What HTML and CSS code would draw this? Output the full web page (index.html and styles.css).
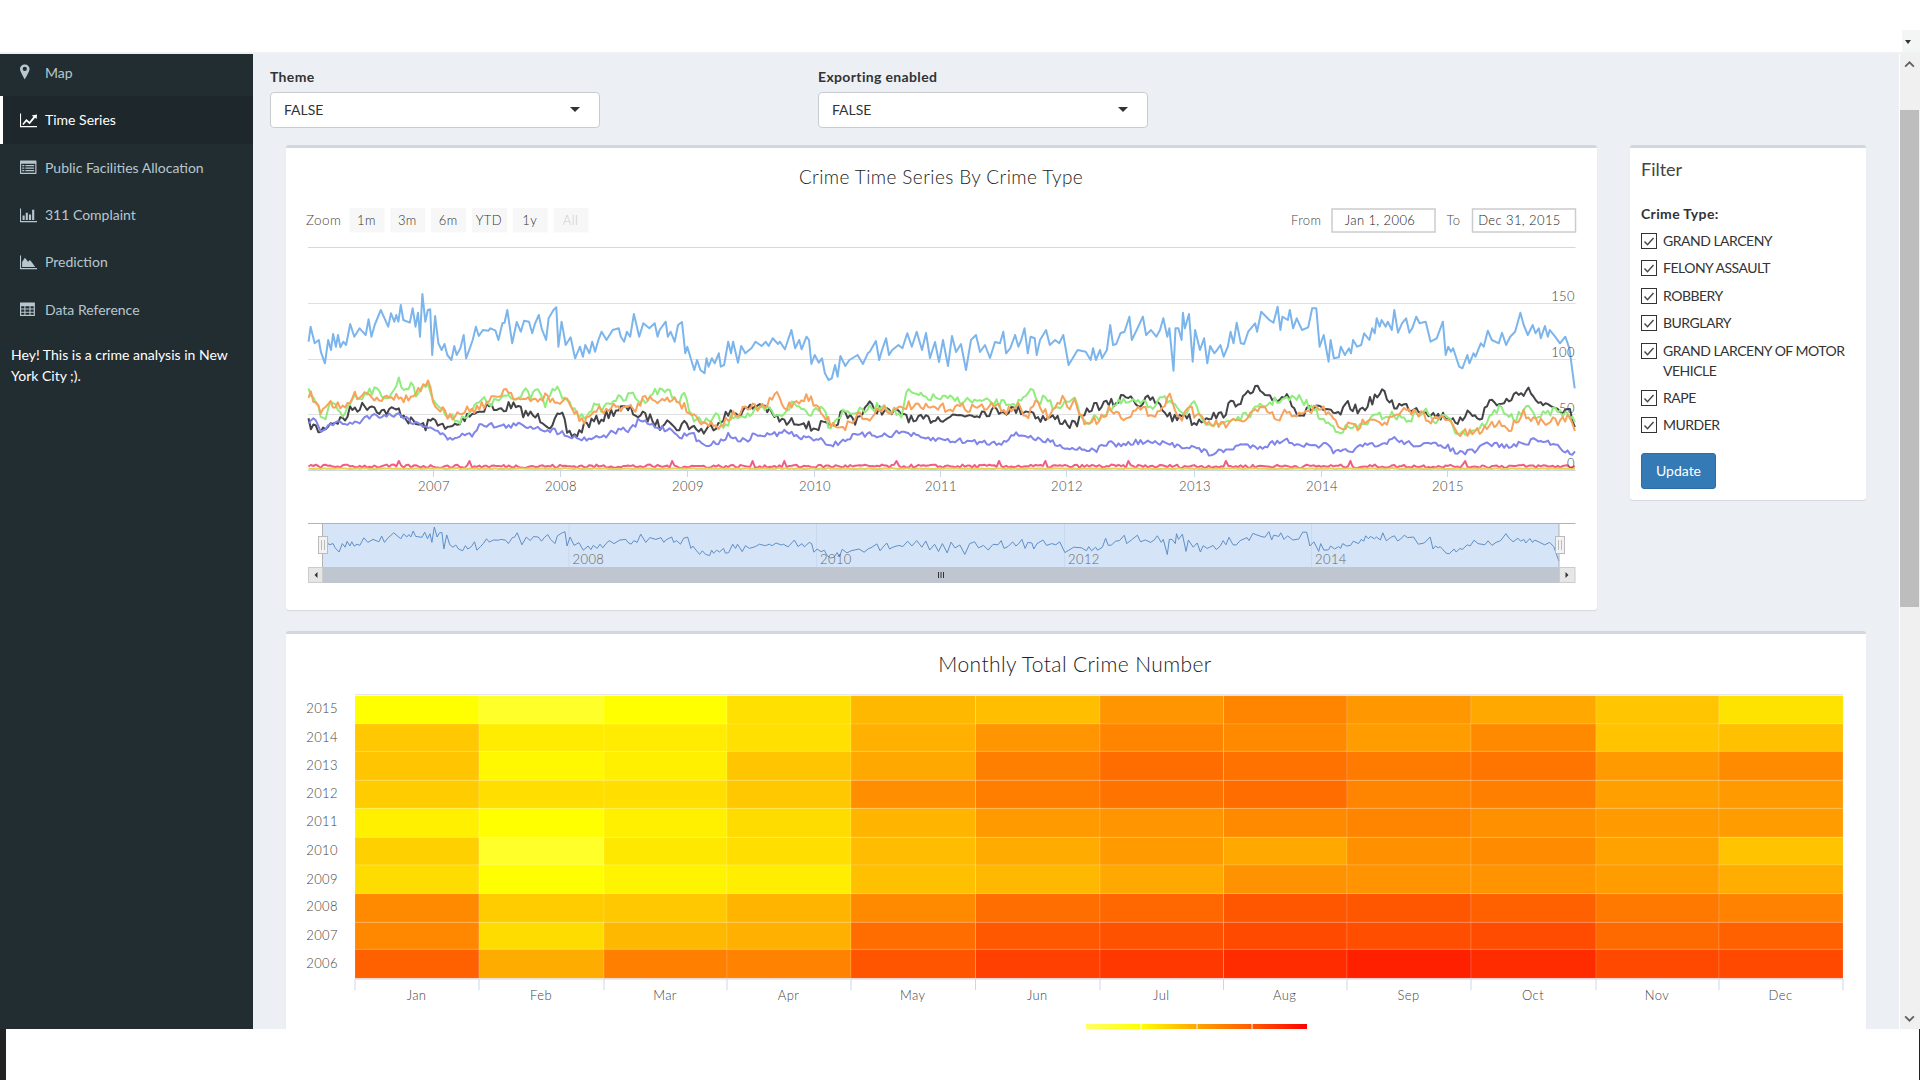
FILE: index.html
```html
<!DOCTYPE html>
<html lang="en">
<head>
    <meta charset="UTF-8">
    <title>Crime Analysis</title>
    <link rel="stylesheet" href="styles.css">
</head>
<body>
    <div class="top-bar">
        <div class="top-drop"><span class="top-caret"></span></div>
    </div>

    <div class="app">
        <aside class="sidebar">
            <ul class="menu">
                <li class="menu-item first">
                    <svg class="icon" viewBox="0 0 16 16"><path fill-rule="evenodd" d="M4.5 0.5C2.1 0.5 0 2.3 0 4.6 0 7 3.1 11.5 4.5 14.5c1.4-3 4.5-7.5 4.5-9.9C9 2.3 6.9 0.5 4.5 0.5zM4.5 6.6a2 2 0 1 1 0-4 2 2 0 0 1 0 4z"/></svg>
                    <span>Map</span>
                </li>
                <li class="menu-item active">
                    <svg class="icon" viewBox="0 0 16 16"><path d="M0 1.5h1v11.6h15.5v1.2H0z"/><path d="M2.2 11.2l3.7-4.6 3 2.6 3.7-4.7-1.6-1.3L16 2.4l-.3 4.2-1.5-1.3-5.1 6.2-3-2.6-2.9 3.4z"/></svg>
                    <span>Time Series</span>
                </li>
                <li class="menu-item">
                    <svg class="icon" viewBox="0 0 16 16"><path fill-rule="evenodd" d="M.5 1.5h14.5a.5.5 0 0 1 .5.5v11.5a.5.5 0 0 1-.5.5H.5a.5.5 0 0 1-.5-.5V2a.5.5 0 0 1 .5-.5zM1.1 4.4v8.5h13.3V4.4zM2.1 5.6h2v1.2h-2zM5.1 5.6h8.2v1.2H5.1zM2.1 8h2v1.2h-2zM5.1 8h8.2v1.2H5.1zM2.1 10.4h2v1.2h-2zM5.1 10.4h8.2v1.2H5.1z"/></svg>
                    <span>Public Facilities Allocation</span>
                </li>
                <li class="menu-item">
                    <svg class="icon" viewBox="0 0 16 16"><path d="M0 1.5h1v11.6h15.5v1.2H0z"/><path d="M2.4 8h2v4.2h-2zM5.4 5.4h2v6.8h-2zM8.4 7h2v5.2h-2zM11.4 2.6h2v9.6h-2z"/></svg>
                    <span>311 Complaint</span>
                </li>
                <li class="menu-item">
                    <svg class="icon" viewBox="0 0 16 16"><path d="M0 1.5h1v11.6h15.5v1.2H0z"/><path d="M2 12.2V7.6l2.6-4 3 3.6 1.7-1.6 2 2.4 3 4.2z"/></svg>
                    <span>Prediction</span>
                </li>
                <li class="menu-item">
                    <svg class="icon" viewBox="0 0 16 16"><path fill-rule="evenodd" d="M0 1.5h14v12.5H0zM1.1 5v2h3V5zM5.1 5v2h3.8V5zM9.9 5v2h3V5zM1.1 8v2h3V8zM5.1 8v2h3.8V8zM9.9 8v2h3V8zM1.1 11v2h3v-2zM5.1 11v2h3.8v-2zM9.9 11v2h3v-2z"/></svg>
                    <span>Data Reference</span>
                </li>
            </ul>
            <p class="intro">Hey! This is a crime analysis in New York City ;).</p>
        </aside>

        <main class="content">
            <div class="options">
                <div class="option">
                    <label class="field-label">Theme</label>
                    <div class="select-box">FALSE<span class="caret"></span></div>
                </div>
                <div class="option">
                    <label class="field-label">Exporting enabled</label>
                    <div class="select-box">FALSE<span class="caret"></span></div>
                </div>
            </div>

            <div class="row">
                <div class="box chart-box">
                    <svg id="seriesChart" class="chart" viewBox="286 148 1311 462" width="1311" height="462"></svg>
                </div>

                <div class="box filter-box">
                    <h3 class="box-title">Filter</h3>
                    <div class="field-label group-label">Crime Type:</div>
                    <div class="check-row"><span class="check"><svg viewBox="0 0 14 14"><path d="M2.5 7.5l3 3.2 6-6.7"/></svg></span><span>GRAND LARCENY</span></div>
                    <div class="check-row"><span class="check"><svg viewBox="0 0 14 14"><path d="M2.5 7.5l3 3.2 6-6.7"/></svg></span><span>FELONY ASSAULT</span></div>
                    <div class="check-row"><span class="check"><svg viewBox="0 0 14 14"><path d="M2.5 7.5l3 3.2 6-6.7"/></svg></span><span>ROBBERY</span></div>
                    <div class="check-row"><span class="check"><svg viewBox="0 0 14 14"><path d="M2.5 7.5l3 3.2 6-6.7"/></svg></span><span>BURGLARY</span></div>
                    <div class="check-row"><span class="check"><svg viewBox="0 0 14 14"><path d="M2.5 7.5l3 3.2 6-6.7"/></svg></span><span>GRAND LARCENY OF MOTOR VEHICLE</span></div>
                    <div class="check-row"><span class="check"><svg viewBox="0 0 14 14"><path d="M2.5 7.5l3 3.2 6-6.7"/></svg></span><span>RAPE</span></div>
                    <div class="check-row"><span class="check"><svg viewBox="0 0 14 14"><path d="M2.5 7.5l3 3.2 6-6.7"/></svg></span><span>MURDER</span></div>
                    <button class="update-btn">Update</button>
                </div>
            </div>

            <div class="box heat-box">
                <svg id="heatChart" class="chart" viewBox="286 634 1580 420" width="1580" height="420"></svg>
            </div>
        </main>

        <div class="scrollbar">
            <svg class="chevron" viewBox="0 0 12 8"><path d="M1 6.5l5-5 5 5"/></svg>
            <div class="thumb"></div>
            <svg class="chevron down" viewBox="0 0 12 8"><path d="M1 1.5l5 5 5-5"/></svg>
        </div>
    </div>

    <div class="bottom-bar"></div>

    <script src="script.js"></script>
</body>
</html>
```

FILE: styles.css
```css
* {
    box-sizing: border-box;
}
html, body {
    margin: 0;
    height: 1080px;
    overflow: hidden;
    background-color: white;
}
body {
    font-family: "Lato", "Noto Sans", sans-serif;
    font-size: 14px;
    line-height: 20px;
    color: #333;
}

/* top and bottom strips */
.top-bar {
    height: 54px;
    background-color: white;
    border-bottom: 2px solid #f0f1f3;
    display: flex;
    justify-content: flex-end;
    align-items: flex-end;
}
.top-drop {
    width: 18px;
    height: 22px;
    background-color: #f4f6f6;
    display: flex;
    padding: 10px 0 0 3px;
}
.top-caret {
    width: 0;
    height: 0;
    border-left: 3px solid transparent;
    border-right: 3px solid transparent;
    border-top: 4px solid #333;
}
.bottom-bar {
    height: 51px;
    background-color: white;
    border-left: 6px solid #222;
    border-right: 1px solid #222;
}

.app {
    display: flex;
    height: 975px;
    overflow: hidden;
}

/* sidebar */
.sidebar {
    width: 253px;
    flex-shrink: 0;
    background-color: #222d32;
    color: #b8c7ce;
}
.menu {
    list-style: none;
    margin: 0;
    padding: 0;
}
.menu-item {
    display: flex;
    align-items: center;
    height: 47.4px;
    border-left: 3px solid transparent;
    padding-left: 17px;
}
.menu-item.first {
    height: 42px;
    padding-bottom: 5px;
}
.menu-item.active {
    height: 48px;
    background-color: #1e282c;
    border-left-color: white;
    color: white;
}
.icon {
    width: 17px;
    height: 17px;
    margin-right: 8px;
    fill: currentColor;
    flex-shrink: 0;
}
.intro {
    margin: 10px 12px 0 11px;
    line-height: 21px;
    color: white;
}

/* main area */
.content {
    flex: 1;
    background-color: #ecf0f5;
    padding-top: 13px;
    overflow: hidden;
    border-right: 1px solid white;
}
.options {
    display: flex;
    padding-left: 17px;
    margin-bottom: 17px;
}
.option {
    width: 548px;
}
.field-label {
    display: block;
    font-weight: 700;
    letter-spacing: 0.35px;
    margin-bottom: 5px;
}
.select-box {
    position: relative;
    width: 330px;
    height: 36px;
    background-color: white;
    border: 1px solid #c9cccf;
    border-radius: 4px;
    padding: 0 13px;
    line-height: 34px;
}
.caret {
    position: absolute;
    right: 19px;
    top: 14px;
    width: 0;
    height: 0;
    border-left: 5px solid transparent;
    border-right: 5px solid transparent;
    border-top: 5px solid #333;
}
.row {
    display: flex;
    gap: 33px;
    padding-left: 33px;
    margin-bottom: 21px;
    align-items: flex-start;
}
.box {
    background-color: white;
    border-top: 3px solid #d2d6de;
    border-radius: 3px;
    box-shadow: 0 1px 1px rgba(0, 0, 0, 0.1);
}
.chart-box {
    width: 1311px;
    height: 465px;
}
.chart {
    display: block;
}
.chart text {
    font-family: "Lato", "Noto Sans", sans-serif;
    font-weight: 300;
    fill: #222;
    letter-spacing: 0.4px;
}
.filter-box {
    width: 236px;
    height: 355px;
    padding: 11px 11px 0;
}
.box-title {
    margin: 0 0 25px;
    font-size: 18px;
    font-weight: 400;
    line-height: 20px;
    color: #444;
}
.group-label {
    margin-bottom: 7px;
}
.check-row {
    display: flex;
    margin-bottom: 7.4px;
    letter-spacing: -0.5px;
}
.check {
    width: 16px;
    height: 16px;
    flex-shrink: 0;
    margin: 2px 6px 0 0;
    border: 1px solid #333;
    background-color: white;
}
.check svg {
    display: block;
    fill: none;
    stroke: #444;
    stroke-width: 1.4;
}
.update-btn {
    display: block;
    width: 75px;
    height: 36px;
    margin-top: 18px;
    padding: 0 0 2px;
    background-color: #337ab7;
    border: 1px solid #2e6da4;
    border-radius: 3px;
    color: white;
    font-family: inherit;
    font-size: 14px;
}
.heat-box {
    width: 1580px;
    height: 420px;
    margin-left: 33px;
}

/* scrollbar */
.scrollbar {
    position: relative;
    width: 20px;
    flex-shrink: 0;
    background-color: #f0f0f0;
}
.thumb {
    position: absolute;
    top: 56px;
    left: 0;
    width: 19px;
    height: 497px;
    background-color: #bdbdbd;
}
.chevron {
    position: absolute;
    top: 7px;
    left: 4px;
    width: 11px;
    height: 7px;
    fill: none;
    stroke: #606060;
    stroke-width: 2;
}
.chevron.down {
    top: auto;
    bottom: 7px;
}
```

FILE: script.js
```js
// page coordinates are used directly inside the svg viewBoxes
function L(zx) { return 280 + zx / 2.45; }
function R(zx) { return 1000 + zx / 2.45; }
function Y(zy) { return 140 + zy / 3; }

// traced points, left half and right half of the plot
function traced(left, right, extra) {
    var pts = [];
    var i;
    for (i = 0; i < left.length; i += 2) pts.push([L(left[i]), Y(left[i + 1])]);
    if (extra) {
        for (i = 0; i < extra.length; i += 2) pts.push([extra[i], extra[i + 1]]);
    }
    for (i = 0; i < right.length; i += 2) pts.push([R(right[i]), Y(right[i + 1])]);
    return pts;
}

var seed = 7;
function rnd() {
    seed = (seed * 16807) % 2147483647;
    return seed / 2147483647;
}

// fill in weekly values between traced points
function weekly(pts, amp) {
    var out = [];
    var j = 0;
    for (var x = 308.5; x <= 1575; x += 2.44) {
        while (j < pts.length - 2 && pts[j + 1][0] < x) j++;
        var a = pts[j], b = pts[j + 1];
        var t = Math.max(0, Math.min(1, (x - a[0]) / (b[0] - a[0])));
        out.push([x, a[1] + (b[1] - a[1]) * t + (rnd() - 0.5) * 2 * amp]);
    }
    return out;
}

function pointsAttr(pts) {
    return pts.map(function (p) { return p[0].toFixed(1) + "," + p[1].toFixed(1); }).join(" ");
}

function line(x1, y1, x2, y2, color) {
    return '<line x1="' + x1 + '" y1="' + y1 + '" x2="' + x2 + '" y2="' + y2 + '" stroke="' + color + '"/>';
}

function text(x, y, str, size, anchor, color) {
    return '<text x="' + x + '" y="' + y + '" font-size="' + size + '" text-anchor="' + (anchor || "start") + '" dominant-baseline="central"' +
        (color ? ' style="fill:' + color + '"' : "") + ">" + str + "</text>";
}

function rect(x, y, w, h, fill, extra) {
    return '<rect x="' + x + '" y="' + y + '" width="' + w + '" height="' + h + '" fill="' + fill + '"' + (extra || "") + "/>";
}

var blue = traced(
    [70,605,75,560,85,610,95,600,100,635,110,670,118,600,125,630,130,582,137,620,142,585,148,622,155,605,162,615,172,552,182,590,195,565,210,585,217,538,224,590,232,555,247,510,265,560,272,520,280,545,285,525,290,545,296,495,302,540,318,548,325,505,332,560,338,518,343,590,349,462,356,545,362,510,368,508,373,645,380,528,388,610,396,630,403,612,410,645,420,660,427,618,433,645,442,625,450,585,456,655,465,625,472,600,480,560,487,588,497,570,510,572,516,565,528,572,535,600,545,550,550,548,557,510,569,610,580,546,590,575,598,542,610,545,618,580,625,550,634,525,641,565,652,600,658,535,670,510,677,502,682,620,690,545,700,615,712,592,723,655,735,620,742,650,748,615,758,640,765,605,772,635,780,600,788,575,800,600,815,570,830,565,835,590,843,605,850,575,858,590,867,522,880,590,890,550,905,565,918,550,925,590,930,570,945,545,950,590,957,575,967,605,975,555,985,546,993,640,998,620,1010,670,1015,690,1022,660,1030,690,1040,700,1045,655,1050,680,1058,655,1065,670,1075,640,1080,680,1088,675,1098,605,1105,640,1110,605,1122,668,1130,618,1140,640,1155,625,1165,605,1180,618,1190,605,1197,618,1207,595,1220,612,1225,605,1237,628,1253,570,1262,625,1272,600,1278,628,1290,590,1296,600,1302,672,1310,645,1320,668,1328,655,1335,700,1344,720,1352,715,1360,675,1366,710,1373,648,1385,678,1395,660,1415,645,1428,672,1440,640,1445,635,1460,603,1468,660,1475,630,1485,595,1492,645,1500,630,1515,615,1525,625,1537,580,1548,620,1560,575],
    [0,610,8,575,15,640,25,625,37,585,45,620,52,600,60,565,68,640,75,590,85,595,90,645,98,600,113,570,122,615,135,600,145,610,155,585,168,675,178,655,190,630,210,635,222,660,228,625,235,660,245,630,250,655,262,630,270,555,277,615,285,612,295,580,305,575,317,530,323,600,335,570,350,530,358,585,370,570,383,590,392,570,400,535,410,590,415,565,425,692,430,565,437,565,445,600,448,518,453,565,463,522,472,665,478,570,490,630,500,595,508,670,515,618,525,640,532,630,540,615,548,650,558,620,565,575,572,610,580,548,590,610,598,612,608,575,625,550,630,575,640,515,660,540,670,548,680,500,687,570,692,530,705,540,710,510,718,565,727,535,740,570,755,562,765,505,775,505,783,620,793,585,805,665,810,600,818,655,830,652,835,620,845,645,855,625,860,640,865,600,875,620,885,615,892,580,905,600,912,565,918,580,923,535,930,560,935,540,945,560,950,545,960,570,966,510,975,578,985,550,995,535,1003,578,1010,565,1020,530,1028,550,1043,545,1055,605,1070,595,1085,545,1092,645,1098,620,1105,635,1110,625,1125,680,1133,685,1145,645,1150,670,1160,640,1165,650,1178,610,1185,620,1195,572,1205,600,1222,610,1230,578,1240,615,1250,590,1262,575,1275,518,1283,555,1293,585,1305,555,1312,580,1320,565,1325,595,1335,558,1342,590,1347,570,1360,590,1372,610,1385,590,1395,625,1408,745],
    [922,350,926,333,930,358,935,342,939,362,943,340,948,366,952,336,956,352,961,344,966,370,971,340,976,335,980,352,985,345,990,358,995,342]
);

var black = traced(
    [70,850,100,875,120,850,160,835,175,805,225,795,250,815,290,810,320,845,355,860,380,835,405,870,440,850,460,820,490,815,510,790,530,815,565,795,600,820,640,835,660,855,690,825,705,880,730,885,745,855,780,840,830,805,860,810,875,825,910,835,930,860,950,825,965,870,990,850,1010,860,1040,875,1070,850,1090,825,1130,815,1180,790,1205,825,1240,850,1280,840,1300,865,1330,855,1355,870,1375,820,1410,840,1440,795,1470,810,1500,820,1530,820,1555,850,1568,840],
    [0,810,40,810,70,810,100,835,140,835,175,855,200,840,225,800,280,790,315,760,340,795,370,775,400,810,430,840,450,815,475,850,510,825,540,830,565,795,610,765,632,742,650,780,680,775,705,765,735,825,780,795,800,820,830,825,855,795,880,815,920,770,940,760,965,795,1000,800,1045,810,1060,825,1100,830,1135,850,1150,815,1180,830,1200,780,1230,795,1255,770,1295,748,1330,805,1355,790,1375,825,1395,815,1408,865]
);

var green = traced(
    [70,755,80,770,110,850,125,785,155,825,175,775,200,770,215,750,240,755,270,775,290,718,305,750,320,730,335,770,350,730,365,745,385,790,410,830,440,840,470,810,495,780,520,790,550,770,570,780,590,770,605,735,615,770,630,730,650,800,675,740,690,770,715,800,740,835,765,800,790,805,820,775,840,780,865,760,885,790,915,755,955,750,975,790,990,765,1010,830,1040,850,1070,825,1088,870,1110,825,1150,825,1175,810,1200,810,1220,835,1255,790,1300,820,1330,790,1345,860,1380,815,1420,815,1480,795,1525,830,1535,755,1568,770],
    [0,790,50,790,78,750,90,790,110,770,130,800,160,790,185,780,200,830,215,845,245,830,290,790,330,785,375,800,395,760,420,790,445,830,480,790,500,840,530,860,560,840,600,830,640,800,680,780,735,775,770,810,790,840,830,870,880,860,920,830,960,825,1000,840,1040,810,1070,850,1100,820,1115,870,1140,880,1180,860,1225,800,1260,840,1290,805,1320,830,1360,810,1408,835]
);

var orange = traced(
    [70,780,75,765,100,810,120,785,155,810,180,770,210,755,240,780,260,760,290,775,320,775,365,730,375,795,400,810,410,840,440,810,480,805,520,780,555,745,580,775,610,785,650,770,680,790,700,780,740,845,770,815,830,800,870,810,885,780,910,765,930,785,970,775,990,800,1010,825,1040,845,1070,860,1110,825,1150,805,1190,800,1218,760,1235,805,1270,780,1295,770,1330,825,1350,850,1385,860,1420,820,1440,845,1470,800,1510,815,1535,795,1568,805],
    [0,800,20,815,40,795,65,830,90,790,120,830,155,770,170,820,185,775,205,850,240,840,270,805,300,830,340,810,385,820,420,765,440,840,465,795,480,830,510,850,550,855,590,845,630,810,660,815,685,850,700,810,740,830,775,800,800,815,830,860,880,860,905,825,940,850,990,815,1030,820,1060,840,1095,835,1120,880,1165,880,1220,845,1250,870,1280,815,1310,840,1385,845,1395,820,1408,885]
);

var purple = traced(
    [70,850,80,835,100,870,130,850,190,850,210,830,250,825,300,825,330,850,370,860,415,900,440,885,470,885,490,850,540,860,580,855,620,860,660,870,700,880,725,895,760,895,800,885,830,870,860,870,880,840,920,860,960,870,985,890,1010,880,1028,910,1070,910,1100,885,1140,905,1160,885,1200,885,1240,875,1280,895,1330,895,1345,920,1400,890,1430,885,1490,885,1530,875,1568,895],
    [0,910,30,885,65,885,90,900,130,905,165,925,210,925,230,935,260,910,300,915,340,905,385,910,425,915,470,920,515,942,560,930,585,915,640,920,695,900,760,920,800,915,820,940,860,930,900,915,930,920,960,895,1000,910,1040,915,1090,915,1120,940,1165,935,1190,910,1250,920,1315,900,1370,915,1385,935,1408,940]
);

function spiky(base, amp) {
    var out = [];
    for (var x = 308.5; x <= 1575; x += 2.44) {
        var r = rnd();
        var y = base - r * amp;
        if (r > 0.98) y -= amp;
        out.push([x, y]);
    }
    return out;
}

function drawSeriesChart() {
    var s = "";
    var i;

    s += text(941, 176, "Crime Time Series By Crime Type", 19, "middle");

    // range selector
    s += text(306, 220, "Zoom", 13.5, "start", "#444");
    var labels = ["1m", "3m", "6m", "YTD", "1y", "All"];
    for (i = 0; i < labels.length; i++) {
        var bx = 349.5 + i * 40.8;
        s += rect(bx, 208, 35, 24.5, "#f7f7f7");
        s += text(bx + 17, 219.5, labels[i], 13, "middle", i === 5 ? "#ccc" : "#333");
    }
    s += text(1291, 219.5, "From", 13, "start", "#444");
    s += rect(1332, 209, 103, 23, "white", ' stroke="#ccc" stroke-width="1.5"');
    s += text(1380, 219.5, "Jan 1, 2006", 13, "middle");
    s += text(1446.5, 219.5, "To", 13, "start", "#444");
    s += rect(1472.5, 209, 103, 23, "white", ' stroke="#ccc" stroke-width="1.5"');
    s += text(1519.5, 219.5, "Dec 31, 2015", 13, "middle");

    // grid
    s += line(308, 247.5, 1575.5, 247.5, "#d8d8d8");
    s += line(308, 303.5, 1575.5, 303.5, "#e0e0e0");
    s += line(308, 359.5, 1575.5, 359.5, "#e0e0e0");
    s += line(308, 414.5, 1575.5, 414.5, "#e0e0e0");
    s += line(308, 470.5, 1575.5, 470.5, "#ccd6eb");

    // year ticks and labels
    var years = [[2007, 434], [2008, 561], [2009, 688], [2010, 815], [2011, 941], [2012, 1067], [2013, 1195], [2014, 1322], [2015, 1448]];
    for (i = 0; i < years.length; i++) {
        s += line(years[i][1] - 0.5, 470, years[i][1] - 0.5, 477, "#ccd6eb");
        s += text(years[i][1], 485.5, years[i][0], 13, "middle", "#444");
    }

    // series
    var series = [
        [blue, "#7cb5ec"],
        [weekly(black, 5), "#434348"],
        [weekly(green, 4), "#90ed7d"],
        [weekly(orange, 4.5), "#f7a35c"],
        [weekly(purple, 2.8), "#8085e9"],
        [spiky(468, 3.5), "#f15c80"],
        [spiky(469, 0.6), "#e4d354"]
    ];
    for (i = 0; i < series.length; i++) {
        s += '<polyline fill="none" stroke="' + series[i][1] + '" stroke-width="2" stroke-linejoin="round" points="' + pointsAttr(series[i][0]) + '"/>';
    }

    // y labels sit over the lines
    s += text(1575, 295.5, "150", 13, "end", "#444");
    s += text(1575, 351.5, "100", 13, "end", "#444");
    s += text(1575, 407.5, "50", 13, "end", "#444");
    s += text(1575, 463, "0", 13, "end", "#444");

    // navigator
    s += rect(322.5, 524, 1236.5, 43, "#d5e4f6");
    var gridX = [569, 816.5, 1064.5, 1311.5];
    var navLabels = ["2008", "2010", "2012", "2014"];
    for (i = 0; i < gridX.length; i++) {
        s += line(gridX[i], 524, gridX[i], 567, "#c9d9ef");
    }
    var nav = blue.map(function (p) {
        return [322.6 + (p[0] - 308) * 0.976, 527 + (p[1] - 294) * 0.36];
    });
    s += '<polyline fill="none" stroke="#5f8fc8" stroke-width="1" points="' + pointsAttr(nav) + '"/>';
    for (i = 0; i < gridX.length; i++) {
        s += text(gridX[i] + 3.5, 558.5, navLabels[i], 13, "start", "#666");
    }
    s += line(308, 523.5, 1575.5, 523.5, "#b2b2b2");
    s += line(322.5, 524, 322.5, 567, "#b2b2b2");
    s += line(1559, 524, 1559, 567, "#b2b2b2");

    // navigator scrollbar
    s += rect(322.5, 567, 1236.5, 16, "#bfc6d0");
    s += rect(308.5, 567.5, 14, 15, "#e6e6e6", ' stroke="#ccc"');
    s += rect(1559.5, 567.5, 15.5, 15, "#e6e6e6", ' stroke="#ccc"');
    s += '<path d="M317.5 572v6l-3-3z" fill="#333"/><path d="M1565.5 572v6l3-3z" fill="#333"/>';
    s += line(938.5, 572, 938.5, 578, "#333") + line(941, 572, 941, 578, "#333") + line(943.5, 572, 943.5, 578, "#333");

    // navigator handles
    var handles = [318, 1555];
    for (i = 0; i < handles.length; i++) {
        s += rect(handles[i] + 0.5, 536.5, 9, 17, "#f2f2f2", ' stroke="#bbb"');
        s += line(handles[i] + 3.5, 540, handles[i] + 3.5, 550, "#bbb") + line(handles[i] + 6.5, 540, handles[i] + 6.5, 550, "#bbb");
    }

    document.getElementById("seriesChart").innerHTML = s;
}

// green channel of each cell, 2015 at the top
var heat = [
    [0xff,0xff,0xff,0xe0,0xb8,0xbf,0x95,0x85,0x98,0xa8,0xc5,0xe3],
    [0xc8,0xec,0xec,0xe0,0xb0,0x95,0x85,0x8a,0x9c,0x8a,0xc3,0xc0],
    [0xc5,0xf8,0xf0,0xc5,0xa8,0x7f,0x6c,0x72,0x7b,0x75,0x9a,0x8c],
    [0xcc,0xde,0xde,0xc8,0x8e,0x7e,0x73,0x6c,0x85,0x7f,0xa0,0x9a],
    [0xf0,0xff,0xf0,0xdc,0xb5,0x9a,0x95,0x8a,0x85,0x90,0x9a,0x9c],
    [0xd0,0xff,0xe8,0xde,0xbc,0xab,0x9b,0xa8,0x90,0x8c,0xa2,0xc3],
    [0xdc,0xff,0xf4,0xee,0xc0,0xb8,0xa8,0x92,0x94,0x94,0x9c,0xad],
    [0x8a,0xcc,0xc8,0xb4,0x8a,0x6e,0x68,0x56,0x56,0x60,0x78,0x82],
    [0x88,0xdc,0xb8,0xb0,0x6c,0x58,0x52,0x4a,0x4e,0x4c,0x6a,0x60],
    [0x60,0xac,0x80,0x82,0x54,0x40,0x38,0x2c,0x20,0x2c,0x48,0x48]
];

function drawHeatChart() {
    var xs = [355, 479, 604, 727, 851, 975.5, 1100, 1223.5, 1347, 1471, 1596, 1719, 1843];
    var ys = [695.7, 724, 751.3, 780.3, 808.3, 837.3, 865, 893.7, 922.3, 949.3, 978.3];
    var yearY = [708, 736.5, 765, 793, 821, 850, 878.5, 906, 935, 963];
    var months = ["Jan", "Feb", "Mar", "Apr", "May", "Jun", "Jul", "Aug", "Sep", "Oct", "Nov", "Dec"];
    var s = "";
    var r, c;

    s += text(1075, 663, "Monthly Total Crime Number", 21, "middle");
    s += line(355, 694.5, 1843, 694.5, "#e6e6f0");

    for (r = 0; r < 10; r++) {
        for (c = 0; c < 12; c++) {
            var blueCh = ((r === 0 || r === 5) && c === 1) ? 42 : 0;
            s += rect(xs[c], ys[r], xs[c + 1] - xs[c], ys[r + 1] - ys[r], "rgb(255," + heat[r][c] + "," + blueCh + ")", ' stroke="rgba(255,255,255,0.15)"');
        }
        s += text(338, yearY[r], 2015 - r, 13, "end", "#444");
    }

    s += line(355, 979, 1843, 979, "#ccd6eb");
    for (c = 0; c <= 12; c++) {
        s += line(xs[c], 979, xs[c], 990, "#ccd6eb");
        if (c < 12) s += text((xs[c] + xs[c + 1]) / 2 - 0.5, 994.5, months[c], 13, "middle", "#444");
    }

    // legend, only its top edge is in view
    s += '<defs><linearGradient id="legendFill"><stop offset="0" stop-color="#ffff66"/><stop offset="0.25" stop-color="#ffff00"/><stop offset="0.5" stop-color="#ffa500"/><stop offset="0.75" stop-color="#ff5a00"/><stop offset="1" stop-color="#ff0000"/></linearGradient></defs>';
    s += rect(1086, 1024, 221, 10, "url(#legendFill)");
    s += line(1141, 1024, 1141, 1034, "#fff") + line(1197, 1024, 1197, 1034, "#fff") + line(1252, 1024, 1252, 1034, "#fff");

    document.getElementById("heatChart").innerHTML = s;
}

drawSeriesChart();
drawHeatChart();
```
